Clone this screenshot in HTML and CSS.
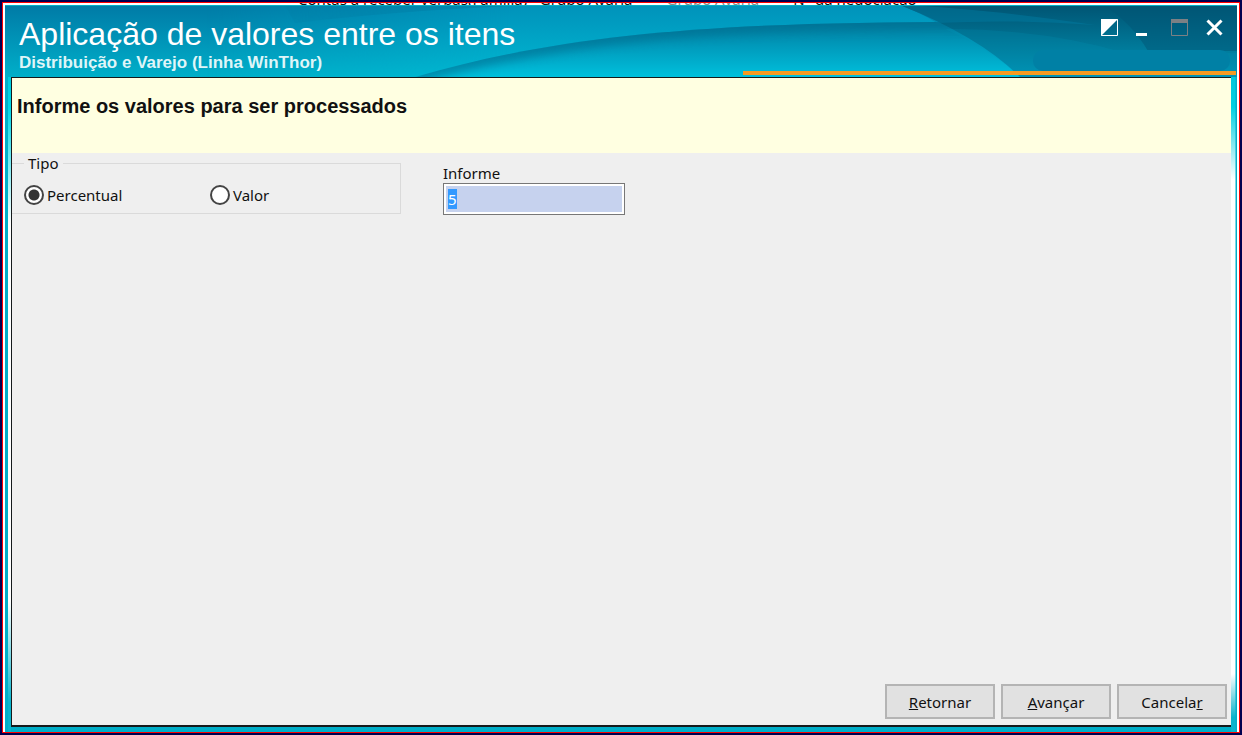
FILE: index.html
```
<!DOCTYPE html>
<html lang="pt-BR">
<head>
    <meta charset="UTF-8">
    <meta name="viewport" content="width=device-width, initial-scale=1.0">
    <title>Aplicação de valores entre os itens</title>
    <link rel="stylesheet" href="styles.css">
</head>
<body>
    <div class="desktop">
        <div class="backdrop" aria-hidden="true">
            <span class="backdrop-main">Contas a receber verbas(Família) - Grupo Avaria</span>
            <span class="backdrop-muted">Grupo Avaria</span>
            <span>N° da negociação</span>
        </div>

        <div class="window">
            <header class="title-bar">
                <svg class="title-art" viewBox="0 0 1232 72" preserveAspectRatio="none" aria-hidden="true">
                    <defs>
                        <linearGradient id="base" x1="0" y1="0" x2="0" y2="1">
                            <stop offset="0" stop-color="#007aa6"/>
                            <stop offset="1" stop-color="#00afc9"/>
                        </linearGradient>
                        <linearGradient id="beam" x1="0" y1="0" x2="0" y2="1">
                            <stop offset="0" stop-color="#0092ba"/>
                            <stop offset="1" stop-color="#00b8d2"/>
                        </linearGradient>
                        <linearGradient id="fade" x1="0" y1="0" x2="1" y2="0">
                            <stop offset="0" stop-color="#fff" stop-opacity="0"/>
                            <stop offset="0.3" stop-color="#fff"/>
                        </linearGradient>
                        <mask id="beam-mask">
                            <rect x="200" width="1032" height="72" fill="url(#fade)"/>
                        </mask>
                        <linearGradient id="hill" x1="0" y1="0" x2="0" y2="1">
                            <stop offset="0" stop-color="#007da0"/>
                            <stop offset="0.5" stop-color="#009ebf"/>
                            <stop offset="1" stop-color="#00c0dc"/>
                        </linearGradient>
                        <clipPath id="hill-clip">
                            <path d="M410 72 C560 28 720 17 960 17 L1232 22 V72 Z"/>
                        </clipPath>
                        <filter id="soft" x="-10%" y="-50%" width="120%" height="200%">
                            <feGaussianBlur stdDeviation="5"/>
                        </filter>
                        <linearGradient id="dark" x1="0" y1="0" x2="0" y2="1">
                            <stop offset="0" stop-color="#005473"/>
                            <stop offset="1" stop-color="#0094b5"/>
                        </linearGradient>
                    </defs>
                    <rect width="1232" height="72" fill="url(#base)"/>
                    <rect x="200" width="1032" height="72" fill="url(#beam)" mask="url(#beam-mask)"/>
                    <path d="M290 18 Q400 5 530 0 H280 Z" fill="#006d94" opacity=".35" mask="url(#beam-mask)"/>
                    <path d="M410 72 C560 28 720 17 960 17 L1232 22 V72 Z" fill="url(#hill)"/>
                    <g clip-path="url(#hill-clip)">
                        <path d="M410 72 C560 28 720 17 960 17 L1232 22" fill="none" stroke="#006c8e" stroke-width="14" opacity=".6" filter="url(#soft)"/>
                    </g>
                    <path d="M895 0 Q975 32 1015 72 H1232 V0 Z" fill="url(#dark)"/>
                    <path d="M895 0 Q975 3 1090 20 Q1010 14 932 18 Q914 7 895 0 Z" fill="#007a9f" opacity=".5"/>
                    <path d="M940 24 Q1040 24 1120 48 H1232 V72 H1015 Q985 44 940 24 Z" fill="#0098ba" opacity=".2"/>
                    <path d="M1098 0 Q1126 17 1143 46 H1232 V0 Z" fill="#005675" opacity=".5"/>
                    <rect x="1028" y="45" width="197" height="21" rx="10" fill="#0080a5"/>
                    <rect width="1232" height="1" fill="#00afc8"/>
                </svg>
                <div class="titles">
                    <h1>Aplicação de valores entre os itens</h1>
                    <p>Distribuição e Varejo (Linha WinThor)</p>
                </div>
                <div class="window-controls">
                    <button type="button" aria-label="Alternar">
                        <svg width="17" height="17" viewBox="0 0 17 17">
                            <path d="M.5 .5H16.5V16.5H.5Z" fill="none" stroke="#fff"/>
                            <path d="M0 0H17L0 17Z" fill="#fff"/>
                        </svg>
                    </button>
                    <button type="button" aria-label="Minimizar">
                        <svg width="17" height="17" viewBox="0 0 17 17">
                            <path d="M0 14H11V17H0Z" fill="#fff"/>
                        </svg>
                    </button>
                    <button type="button" aria-label="Maximizar" disabled>
                        <svg width="17" height="17" viewBox="0 0 17 17">
                            <path d="M.5 .5H16.5V16.5H.5Z" fill="none" stroke="#7c8084"/>
                            <path d="M0 0H17V4H0Z" fill="#7c8084"/>
                        </svg>
                    </button>
                    <button type="button" aria-label="Fechar">
                        <svg width="17" height="17" viewBox="0 0 17 17">
                            <path d="M1.5 1.5L15.5 15.5M15.5 1.5L1.5 15.5" stroke="#fff" stroke-width="3"/>
                        </svg>
                    </button>
                </div>
            </header>

            <main class="panel">
                <h2>Informe os valores para ser processados</h2>

                <form class="form">
                    <div class="fields">
                        <fieldset>
                            <legend>Tipo</legend>
                            <label><input type="radio" name="tipo" value="percentual" checked>Percentual</label>
                            <label><input type="radio" name="tipo" value="valor">Valor</label>
                        </fieldset>
                        <div class="field">
                            <label for="informe">Informe</label>
                            <input type="text" id="informe" value="5" autocomplete="off">
                        </div>
                    </div>

                    <div class="actions">
                        <button type="button"><u>R</u>etornar</button>
                        <button type="button"><u>A</u>vançar</button>
                        <button type="button">Cancela<u>r</u></button>
                    </div>
                </form>
            </main>
        </div>
    </div>

    <script>
        // The value starts selected so it can be typed over
        const informe = document.getElementById('informe');
        informe.focus();
        informe.select();
    </script>
</body>
</html>
```

FILE: styles.css
```
:root {
    --navy: #00004f;
    --teal: #00aec8;
    --surface: #efefef;
    --notice: #ffffe1;
    --field: #c6d2ee;
}

* {
    box-sizing: border-box;
}

body {
    margin: 0;
    padding: 2px;
    height: 100vh;
    background: var(--navy);
    color: #111;
    font-family: "Noto Sans", Tahoma, sans-serif;
    font-size: 15px;
    line-height: 20px;
}

.desktop {
    display: flex;
    flex-direction: column;
    height: 100%;
    border: 1px solid #f00;
    background: #fff;
}

/* Only the bottom edge of the screen behind shows above the window */
.backdrop {
    display: flex;
    align-items: flex-end;
    flex: none;
    gap: 34px;
    height: 2px;
    padding-left: 295px;
    overflow: hidden;
    font-size: 15px;
    line-height: 12px;
    white-space: nowrap;
}

.backdrop-muted {
    color: #888;
}

.window {
    display: flex;
    flex-direction: column;
    flex: 1;
    min-height: 0;
    margin: 0 2px;
    background:
        linear-gradient(#00b4cc, #00d6e6 14%, #fff 30%, #fff 82%, #0ab4cc 96%) 3px 0 / 3px 100% no-repeat,
        linear-gradient(90deg, transparent 4px, var(--teal) 5px) right / 6px 100% no-repeat,
        linear-gradient(#00b4cc, #00d0e2 14%, #fff 24%, #fff 92%, #0ab4cc 98%) right / 6px 100% no-repeat,
        var(--teal);
}

.title-bar {
    display: flex;
    justify-content: space-between;
    position: relative;
    flex: none;
    height: 72px;
    padding: 12px 14px;
    color: #fff;
    font-family: "Liberation Sans", Arial, sans-serif;
}

.title-bar::after {
    content: "";
    position: absolute;
    right: 1px;
    bottom: 2px;
    width: 40%;
    height: 4px;
    background: #f59a22;
}

.title-art {
    position: absolute;
    inset: 0;
    width: 100%;
    height: 100%;
}

.titles {
    position: relative;
}

.titles h1 {
    margin: 0;
    font-size: 32px;
    font-weight: normal;
    line-height: 34px;
}

.titles p {
    margin: 0;
    color: #dff5f8;
    font-size: 17px;
    font-weight: bold;
    line-height: 24px;
}

.window-controls {
    display: flex;
    gap: 18px;
    position: relative;
    padding-top: 2px;
}

.window-controls button {
    width: 17px;
    height: 17px;
    padding: 0;
    border: none;
    background: none;
}

.window-controls svg {
    display: block;
}

.panel {
    display: flex;
    flex-direction: column;
    flex: 1;
    margin: 0 6px 5px;
    border: solid #151a1c;
    border-width: 1px 0 2px 1px;
    background: var(--surface);
}

.panel h2 {
    margin: 0;
    height: 75px;
    padding: 16px 5px;
    background: var(--notice);
    font-family: "Liberation Sans", Arial, sans-serif;
    font-size: 20px;
    line-height: 24px;
}

.form {
    display: flex;
    flex-direction: column;
    justify-content: space-between;
    flex: 1;
}

.fields {
    display: flex;
    gap: 42px;
}

fieldset {
    display: flex;
    width: 389px;
    height: 61px;
    margin: 0;
    padding: 12px 0 0 12px;
    border: 1px solid #dadada;
    border-left: none;
}

legend {
    padding: 0 4px;
}

fieldset label {
    display: flex;
    align-items: center;
    gap: 3px;
    width: 186px;
    height: 20px;
}

input[type="radio"] {
    appearance: none;
    width: 20px;
    height: 20px;
    margin: 0;
    border: 2px solid #444;
    border-radius: 50%;
    background: #fff;
}

input[type="radio"]:checked {
    background: radial-gradient(circle, #333 5px, #fff 6px);
}

.field {
    display: flex;
    flex-direction: column;
    padding-top: 10px;
}

input[type="text"] {
    width: 182px;
    height: 32px;
    padding: 0 4px;
    border: 1px solid #777;
    outline: none;
    background: var(--field);
    box-shadow: inset 0 0 0 2px #fff;
    font: inherit;
}

input[type="text"]::selection {
    background: #3399ff;
    color: #fff;
}

.actions {
    display: flex;
    justify-content: flex-end;
    gap: 6px;
    padding: 6px 4px;
}

.actions button {
    width: 110px;
    height: 35px;
    padding: 0;
    border: 2px solid #b4b4b4;
    background: #e1e1e1;
    color: inherit;
    font: inherit;
}
```
